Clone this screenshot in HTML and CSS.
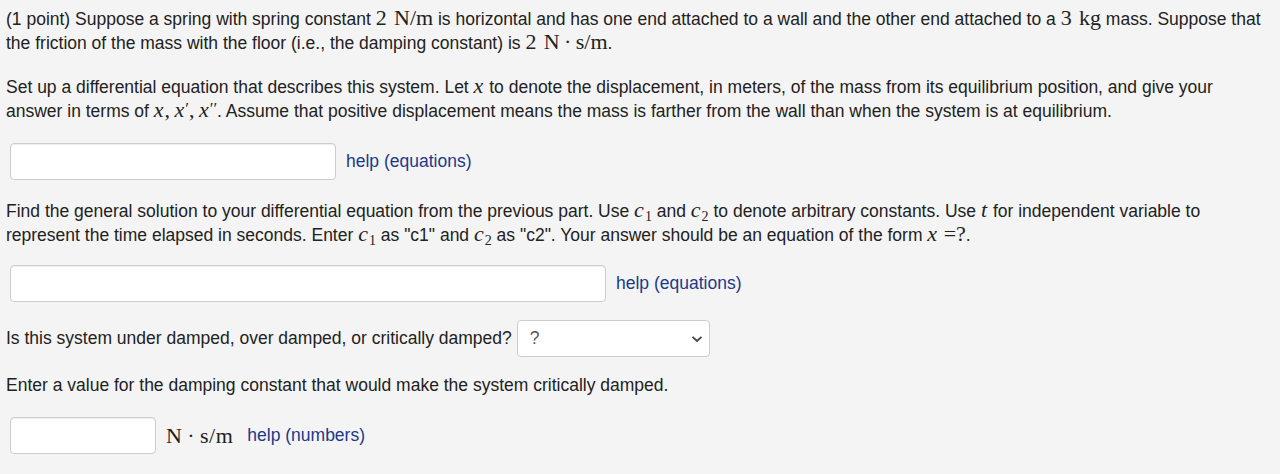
FILE: index.html
```html
<!DOCTYPE html>
<html>
<head>
<meta charset="utf-8">
<link rel="stylesheet" href="styles.css">
</head>
<body>
<div class="problem">
  <p class="para">(1 point) Suppose a spring with spring constant <span class="m">2&#8196;N/m</span> is horizontal and has one end attached to a wall and the other end attached to a <span class="m">3&#8196;kg</span> mass. Suppose that the friction of the mass with the floor (i.e., the damping constant) is <span class="m">2&#8196;N&#8201;·&#8201;s/m</span>.</p>

  <p class="para">Set up a differential equation that describes this system. Let <span class="m"><i>x</i></span> to denote the displacement, in meters, of the mass from its equilibrium position, and give your answer in terms of <span class="m"><i>x</i>,&#8201;<i>x</i><sup>′</sup>,&#8201;<i>x</i><sup>′′</sup></span>. Assume that positive displacement means the mass is farther from the wall than when the system is at equilibrium.</p>

  <div class="answer">
    <input class="box box-md" type="text">
    <a class="help" href="#">help (equations)</a>
  </div>

  <p class="para para-3">Find the general solution to your differential equation from the previous part. Use <span class="m"><i>c</i><sub>1</sub></span> and <span class="m"><i>c</i><sub>2</sub></span> to denote arbitrary constants. Use <span class="m"><i>t</i></span> for independent variable to represent the time elapsed in seconds. Enter <span class="m"><i>c</i><sub>1</sub></span> as "c1" and <span class="m"><i>c</i><sub>2</sub></span> as "c2". Your answer should be an equation of the form <span class="m"><i>x</i>&#8197;=?</span>.</p>

  <div class="answer answer-2">
    <input class="box box-lg" type="text">
    <a class="help" href="#">help (equations)</a>
  </div>

  <div class="select-row">
    <span>Is this system under damped, over damped, or critically damped?</span>
    <div class="select">
      <span class="q">?</span>
      <svg class="chev" width="12" height="8" viewBox="0 0 12 8"><path d="M1.5 1.8 L6 6 L10.5 1.8" fill="none" stroke="#444" stroke-width="1.8"/></svg>
    </div>
  </div>

  <p class="para para-enter">Enter a value for the damping constant that would make the system critically damped.</p>

  <div class="answer">
    <input class="box box-sm" type="text">
    <span class="m unit">N&#8201;·&#8201;s/m</span>
    <a class="help" href="#">help (numbers)</a>
  </div>
</div>
</body>
</html>
```

FILE: styles.css
```css
html, body {
  margin: 0;
  padding: 0;
  background: #f4f4f4;
}
body {
  font-family: "Liberation Sans", Arial, sans-serif;
  font-size: 17.5px;
  color: #222;
}
.problem {
  padding: 7px 6px 0 6px;
}
.para {
  margin: 0 0 20px 0;
  line-height: 24px;
  width: 1262px;
}
.para-3 {
  margin-bottom: 18px;
}
.para-enter {
  margin-bottom: 20px;
}
.m {
  font-family: "Liberation Serif", "Times New Roman", serif;
  font-size: 22px;
  line-height: 1;
  white-space: nowrap;
}
.m i {
  font-style: italic;
  padding-right: 1px;
}
.m sub {
  font-size: 14px;
  vertical-align: -4px;
  line-height: 0;
}
.m sup {
  font-size: 17px;
  vertical-align: 3px;
  line-height: 0;
}
.answer {
  display: flex;
  align-items: center;
  gap: 10px;
  margin: 0 0 19px 4px;
}
.answer-2 {
  margin-bottom: 18px;
}
.box {
  box-sizing: border-box;
  height: 37px;
  border: 1px solid #cccccc;
  border-radius: 4px;
  background: #fff;
  box-shadow: inset 0 1px 1px rgba(0,0,0,0.075);
  margin: 0;
  padding: 0 8px;
}
.box-md { width: 326px; }
.box-lg { width: 596px; }
.box-sm { width: 146px; }
.help {
  color: #1c3a8a;
  text-decoration: none;
}
.unit {
  margin-right: 4px;
  letter-spacing: 0.5px;
}
.select-row {
  display: flex;
  align-items: center;
  gap: 5px;
  margin: 0 0 16px 0;
}
.select {
  box-sizing: border-box;
  width: 193px;
  height: 37px;
  border: 1px solid #cccccc;
  border-radius: 4px;
  background: #fff;
  display: flex;
  align-items: center;
  justify-content: space-between;
  padding: 0 6px 0 12px;
}
.q {
  color: #555;
}
```
